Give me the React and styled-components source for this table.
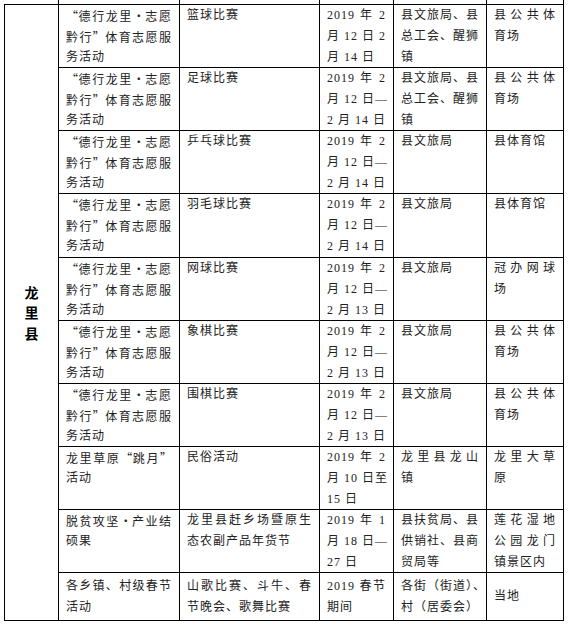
import styled, { createGlobalStyle } from 'styled-components'

const GlobalStyle = createGlobalStyle`
  body {
    margin: 0;
    background: #fff;
  }
`

const rows = [
  {
    name: ['“德行龙里·志愿', '黔行”体育志愿服', '务活动'],
    item: ['篮球比赛'],
    date: ['2019 年 2', '月 12 日 2', '月 14 日'],
    org: ['县文旅局、县', '总工会、醒狮', '镇'],
    place: ['县公共体', '育场'],
  },
  {
    name: ['“德行龙里·志愿', '黔行”体育志愿服', '务活动'],
    item: ['足球比赛'],
    date: ['2019 年 2', '月 12 日—', '2 月 14 日'],
    org: ['县文旅局、县', '总工会、醒狮', '镇'],
    place: ['县公共体', '育场'],
  },
  {
    name: ['“德行龙里·志愿', '黔行”体育志愿服', '务活动'],
    item: ['乒乓球比赛'],
    date: ['2019 年 2', '月 12 日—', '2 月 14 日'],
    org: ['县文旅局'],
    place: ['县体育馆'],
  },
  {
    name: ['“德行龙里·志愿', '黔行”体育志愿服', '务活动'],
    item: ['羽毛球比赛'],
    date: ['2019 年 2', '月 12 日—', '2 月 14 日'],
    org: ['县文旅局'],
    place: ['县体育馆'],
  },
  {
    name: ['“德行龙里·志愿', '黔行”体育志愿服', '务活动'],
    item: ['网球比赛'],
    date: ['2019 年 2', '月 12 日—', '2 月 13 日'],
    org: ['县文旅局'],
    place: ['冠办网球', '场'],
  },
  {
    name: ['“德行龙里·志愿', '黔行”体育志愿服', '务活动'],
    item: ['象棋比赛'],
    date: ['2019 年 2', '月 12 日—', '2 月 13 日'],
    org: ['县文旅局'],
    place: ['县公共体', '育场'],
  },
  {
    name: ['“德行龙里·志愿', '黔行”体育志愿服', '务活动'],
    item: ['围棋比赛'],
    date: ['2019 年 2', '月 12 日—', '2 月 13 日'],
    org: ['县文旅局'],
    place: ['县公共体', '育场'],
  },
  {
    name: ['龙里草原“跳月”', '活动'],
    item: ['民俗活动'],
    date: ['2019 年 2', '月 10 日至', '15 日'],
    org: ['龙里县龙山', '镇'],
    place: ['龙里大草', '原'],
  },
  {
    name: ['脱贫攻坚·产业结', '硕果'],
    item: ['龙里县赶乡场暨原生', '态农副产品年货节'],
    date: ['2019 年 1', '月 18 日—', '27 日'],
    org: ['县扶贫局、县', '供销社、县商', '贸局等'],
    place: ['莲花湿地', '公园龙门', '镇景区内'],
  },
  {
    name: ['各乡镇、村级春节', '活动'],
    item: ['山歌比赛、斗牛、春', '节晚会、歌舞比赛'],
    date: ['2019 春节', '期间'],
    org: ['各街（街道）、', '村（居委会）'],
    place: ['当地'],
    middle: true,
  },
]

const Sheet = styled.div`
  display: grid;
  grid-template-columns: 55px 121px 140px 74px 93px 77px;
  grid-template-rows: 5px repeat(3, 63px) 64px repeat(5, 63px) 48px;
  padding-left: 4px;
  font-family: "Liberation Serif", "Noto Sans CJK SC", serif;
  font-size: 12px;
  color: #222;
`

const Stub = styled.div`
  box-sizing: border-box;
  border-right: 1px solid #000;
  border-bottom: 1px solid #000;
`

const County = styled.div`
  grid-column: 1;
  grid-row: 2 / 12;
  box-sizing: border-box;
  border-left: 1px solid #000;
  border-right: 1px solid #000;
  border-bottom: 1px solid #000;
  display: flex;
  align-items: center;
  justify-content: center;
`

const CountyName = styled.div`
  width: 14px;
  font-family: "Noto Sans CJK SC", sans-serif;
  font-size: 14px;
  font-weight: 700;
  line-height: 20.5px;
  color: #000;
  word-break: break-all;
`

const Cell = styled.div`
  box-sizing: border-box;
  border-right: 1px solid #000;
  border-bottom: 1px solid #000;
  padding: 0 7px;
  display: flex;
  flex-direction: column;
  justify-content: ${p => (p.$middle ? 'center' : 'flex-start')};
  overflow: hidden;
`

const Line = styled.div`
  line-height: 21px;
  height: 21px;
  white-space: nowrap;
  letter-spacing: 1px;
  text-align: ${p => (p.$fill ? 'justify' : 'left')};
  text-align-last: ${p => (p.$fill ? 'justify' : 'left')};
`

const Wide = styled.span`
  display: inline-block;
  width: 12px;
  font-family: "Noto Sans CJK SC", sans-serif;
  text-align: ${p => p.$align};
`

const alignOf = { '“': 'right', '”': 'left', '·': 'center' }

const renderText = text =>
  [...text].map((ch, i) =>
    alignOf[ch] ? (
      <Wide key={i} $align={alignOf[ch]}>
        {ch}
      </Wide>
    ) : (
      ch
    )
  )

const Lines = ({ lines, middle }) => (
  <Cell $middle={middle}>
    {lines.map((l, i) => (
      <Line key={i} $fill={i < lines.length - 1}>
        {renderText(l)}
      </Line>
    ))}
  </Cell>
)

const App = () => (
  <>
    <GlobalStyle />
    <Sheet>
      {[0, 1, 2, 3, 4, 5].map(i => (
        <Stub key={i} />
      ))}
      <County>
        <CountyName>龙里县</CountyName>
      </County>
      {rows.map((r, i) => [
        <Lines key={`n${i}`} lines={r.name} middle={r.middle} />,
        <Lines key={`i${i}`} lines={r.item} middle={r.middle} />,
        <Lines key={`d${i}`} lines={r.date} middle={r.middle} />,
        <Lines key={`o${i}`} lines={r.org} middle={r.middle} />,
        <Lines key={`p${i}`} lines={r.place} middle={r.middle} />,
      ])}
    </Sheet>
  </>
)

export default App
